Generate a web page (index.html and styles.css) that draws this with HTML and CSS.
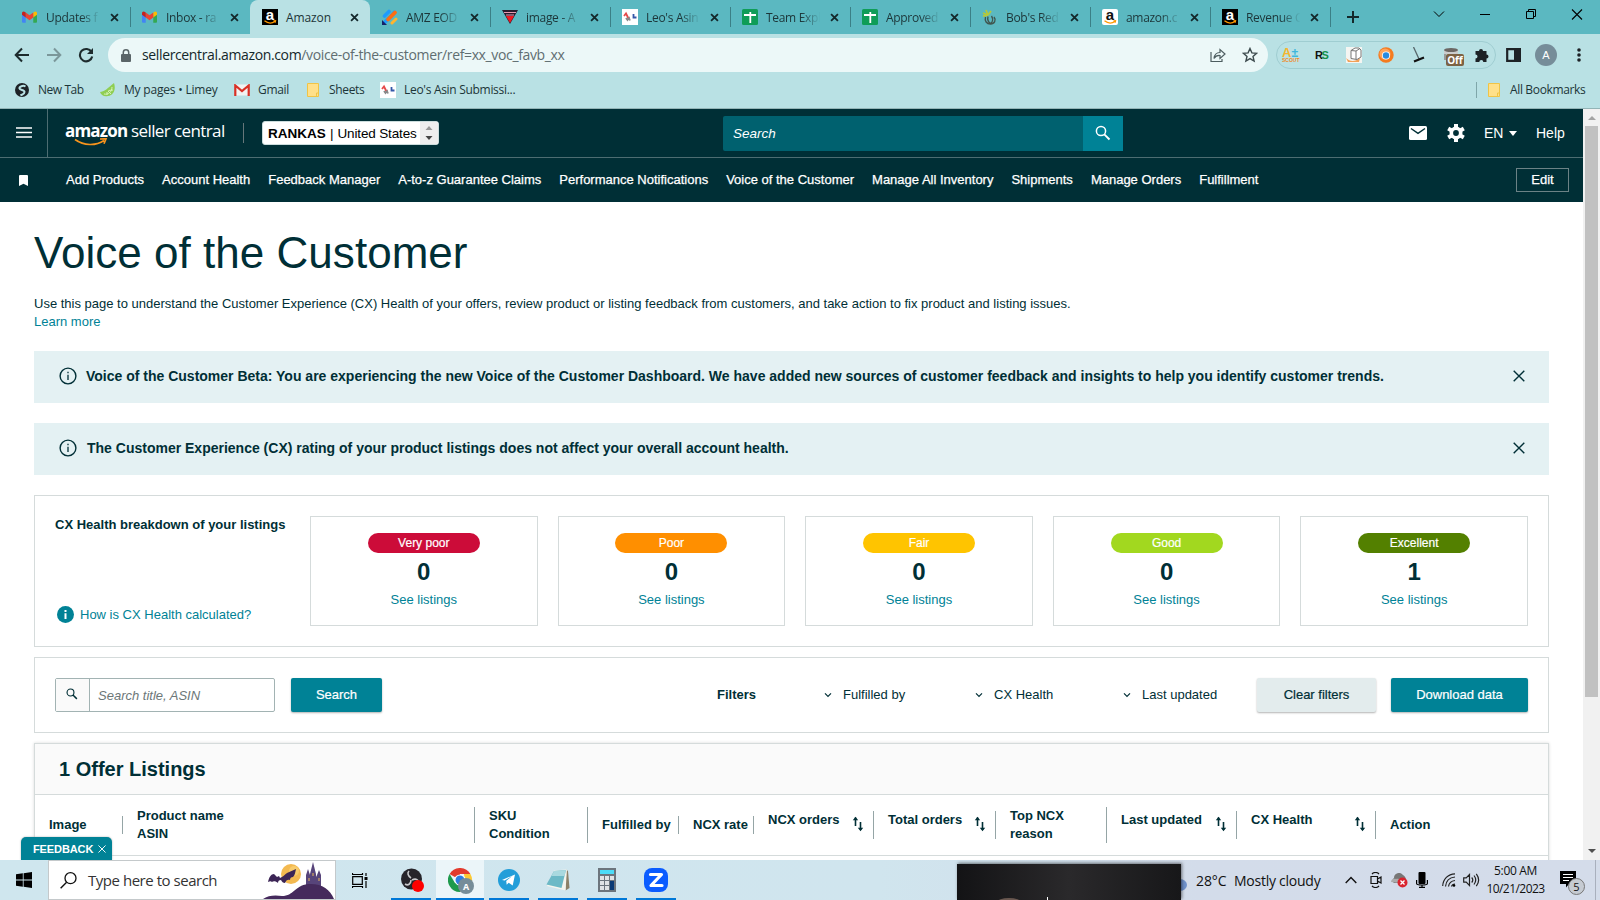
FILE: index.html
```html
<!DOCTYPE html>
<html lang="en">
<head>
<meta charset="utf-8">
<title>Voice of the Customer</title>
<link rel="stylesheet" href="styles.css">
</head>
<body>
<svg class="defs" width="0" height="0">
  <symbol id="x" viewBox="0 0 10 10"><path d="M1.2 1.2 8.8 8.8M8.8 1.2 1.2 8.8" stroke="currentColor" stroke-width="2" fill="none"/></symbol>
  <symbol id="thinx" viewBox="0 0 12 12"><path d="M.7.7 11.3 11.3M11.3.7.7 11.3" stroke="currentColor" stroke-width="1.4" fill="none"/></symbol>
  <symbol id="gm" viewBox="0 0 16 12"><path d="M0 2v9a1 1 0 0 0 1 1h3V5z" fill="#4285f4"/><path d="M16 2v9a1 1 0 0 1-1 1h-3V5z" fill="#34a853"/><path d="M12 1.2 13.5.3C14.700-.4 16 .5 16 2v1.500L12 6.500z" fill="#fbbc04"/><path d="M4 6.500V1.200l4 3 4-3v5.300l-4 3z" fill="#ea4335"/><path d="M0 2C0 .5 1.300-.4 2.500.3L4 1.200v5.300L0 3.500z" fill="#c5221f"/></symbol>
  <symbol id="sheet" viewBox="0 0 16 16"><rect width="16" height="16" rx="1.500" fill="#0f9d58"/><path d="M2 6h12M8.300 3v11" stroke="#fff" stroke-width="1.800"/></symbol>
  <symbol id="leo" viewBox="0 0 16 16"><rect width="16" height="16" fill="#fff"/><path d="M2 7 4 4.500 6 8.500l1.500.5" stroke="#e54b4b" stroke-width="1.800" fill="none"/><path d="M4 9l1.500 2L7 9l1 2.500" stroke="#888" stroke-width="1.800" fill="none"/><path d="M11.500 5V8.500h3" stroke="#3558a8" stroke-width="1.800" fill="none"/></symbol>
  <symbol id="smile" viewBox="0 0 16 16"><path d="M2.500 11.800C6 14.600 10 14.500 13 12.400M11.500 12l2-.2-.3 1.800" stroke="#f90" stroke-width="1.300" fill="none"/></symbol>
  <symbol id="folder" viewBox="0 0 12 14"><path d="M.5.5h11v13H.5z" fill="#ffe08a" stroke="#f0c445"/><path d="M9.500 13.500v-3.500h2" fill="none" stroke="#f0c445"/></symbol>
  <symbol id="info" viewBox="0 0 18 18"><circle cx="9" cy="9" r="7.900" fill="none" stroke="#002f36" stroke-width="1.400"/><path d="M9 7.800V13M9 4.800v1.500" stroke="#002f36" stroke-width="1.300"/></symbol>
  <symbol id="mag" viewBox="0 0 16 16"><circle cx="6" cy="6" r="4.600" fill="none" stroke="currentColor" stroke-width="1.500"/><path d="m9.300 9.300 5.200 5.200" stroke="currentColor" stroke-width="1.900"/></symbol>
  <symbol id="chev" viewBox="0 0 8 6"><path d="m1 1.300 3 3 3-3" fill="none" stroke="#002f36" stroke-width="1.200"/></symbol>
  <symbol id="sort" viewBox="0 0 12 16"><path d="M3.500 1.500V10M8.500 6v8" stroke="#002f36" stroke-width="1.600"/><path d="M.8 4.300 3.500.8l2.700 3.500zM5.800 11.700l2.700 3.500 2.700-3.500z" fill="#002f36"/></symbol>
</svg>

<div class="tabs">
  <div class="tab"><svg class="fav"><use href="#gm" y="2" width="15" height="12"/></svg><span class="tt">Updates f</span><svg class="tx"><use href="#x"/></svg></div>
  <div class="tab nosep"><svg class="fav"><use href="#gm" y="2" width="15" height="12"/></svg><span class="tt">Inbox - ra</span><svg class="tx"><use href="#x"/></svg></div>
  <div class="tab active"><span class="fav az">a<svg><use href="#smile"/></svg></span><span class="tt full">Amazon</span><svg class="tx"><use href="#x"/></svg></div>
  <div class="tab"><svg class="fav" viewBox="0 0 16 16"><path d="M2.500 7 7 2.500M3 13l7-7 2-2.500" stroke="#1e9bff" stroke-width="3.600" stroke-linecap="round"/><path d="m6 10.500 7-7" stroke="#ff6d10" stroke-width="3.800" stroke-linecap="round"/><path d="m10 14 4-4" stroke="#ffb52e" stroke-width="3" stroke-linecap="round"/><path d="M0 11v5h5z" fill="#14216a"/></svg><span class="tt">AMZ EOD</span><svg class="tx"><use href="#x"/></svg></div>
  <div class="tab"><svg class="fav" viewBox="0 0 16 16"><path d="M0 1h16L8 15z" fill="#2a1a2c"/><path d="M4 7h8l-4 7z" fill="#f01820"/><path d="M2 3.500h12M4 6h8" stroke="#e79ab0" stroke-width="1"/></svg><span class="tt">image - A</span><svg class="tx"><use href="#x"/></svg></div>
  <div class="tab"><svg class="fav"><use href="#leo"/></svg><span class="tt">Leo's Asin</span><svg class="tx"><use href="#x"/></svg></div>
  <div class="tab"><svg class="fav"><use href="#sheet"/></svg><span class="tt">Team Expl</span><svg class="tx"><use href="#x"/></svg></div>
  <div class="tab"><svg class="fav"><use href="#sheet"/></svg><span class="tt">Approved</span><svg class="tx"><use href="#x"/></svg></div>
  <div class="tab"><svg class="fav" viewBox="0 0 16 16"><path d="M6 6 1 4M6 6 4 1M6 6 9 2M6 6 1 7" stroke="#b5c83a" stroke-width="1.800"/><path d="M3.500 8c-1 4 1 7 5 7s6-4 3.500-7M6 7.500c-1 4 1 6 2.500 7M9.500 7c2 3 1 6-1 7.500" stroke="#40564f" stroke-width="1.400" fill="none"/></svg><span class="tt">Bob's Red</span><svg class="tx"><use href="#x"/></svg></div>
  <div class="tab"><span class="fav az white">a<svg><use href="#smile"/></svg></span><span class="tt">amazon.c</span><svg class="tx"><use href="#x"/></svg></div>
  <div class="tab"><span class="fav az">a<svg><use href="#smile"/></svg></span><span class="tt">Revenue C</span><svg class="tx"><use href="#x"/></svg></div>
  <svg class="plus" viewBox="0 0 12 12"><path d="M6 0v12M0 6h12" stroke="#14282b" stroke-width="2"/></svg>
  <div class="wctl">
    <svg viewBox="0 0 46 28"><path d="m18 11.500 5 5 5-5" fill="none" stroke="#000"/></svg>
    <svg viewBox="0 0 46 28"><path d="M18 14.500h10" stroke="#000"/></svg>
    <svg viewBox="0 0 46 28"><path d="M18.500 11.500h7v7h-7zM20.500 11.500v-2h7v7h-2" fill="none" stroke="#000"/></svg>
    <svg viewBox="0 0 46 28"><path d="m18 9.500 10 10m0-10-10 10" stroke="#000" stroke-width="1.100"/></svg>
  </div>
</div>

<div class="toolbar">
  <svg class="navi" viewBox="0 0 16 16"><path d="M15 8H2M8 1.500 1.700 8 8 14.500" fill="none" stroke="#1d2b2d" stroke-width="2"/></svg>
  <svg class="navi dim" viewBox="0 0 16 16"><path d="M1 8h13M8 1.500 14.300 8 8 14.500" fill="none" stroke="#7b979a" stroke-width="2"/></svg>
  <svg class="navi" viewBox="0 0 16 16"><path d="M13.500 5A6.200 6.200 0 1 0 14.200 9.500" fill="none" stroke="#1d2b2d" stroke-width="2.100"/><path d="M15 1v6H9z" fill="#1d2b2d"/></svg>
  <div class="omni">
    <svg class="lock" viewBox="0 0 10 13"><rect y="5" width="10" height="8" rx="1" fill="#5a6568"/><path d="M2.300 5V3.500a2.700 2.700 0 0 1 5.400 0V5" fill="none" stroke="#5a6568" stroke-width="1.500"/></svg>
    <span class="url"><b>sellercentral.amazon.com</b>/voice-of-the-customer/ref=xx_voc_favb_xx</span>
    <svg class="share" viewBox="0 0 16 16"><path d="M1 5v9.500h11V12M4 11.500C4.500 7 7 5.500 10 5.500V2.500l5 4.500-5 4.500v-3C7.500 8.300 5.500 9 4 11.500z" fill="none" stroke="#4d5d60" stroke-width="1.200"/></svg>
    <svg class="star" viewBox="0 0 16 16"><path d="m8 1.500 1.900 4.400 4.700.4-3.600 3.100 1.100 4.700L8 11.600l-4.100 2.500L5 9.400 1.400 6.300l4.700-.4z" fill="none" stroke="#3d4b4e" stroke-width="1.400"/></svg>
  </div>
  <div class="exts">
    <span class="scout"><i>A</i><em>±</em><small>SCOUT</small></span>
    <span class="rs">R<i>S</i></span>
    <svg viewBox="0 0 16 16"><rect width="16" height="16" fill="#f5f5f2"/><path d="M0 11c4 4 9 4 14 0l-1 4H2z" fill="#f2a158"/><path d="M5 3.500 9 1h4l2 2v7l-4 2.500-6-1zM5 3.500l5 .5v8M10 4l4-2.500" fill="#fff" stroke="#777"/></svg>
    <svg viewBox="0 0 16 16"><circle cx="8" cy="8" r="7.700" fill="#f47b20"/><circle cx="7" cy="7" r="5.500" fill="#ffa55c"/><circle cx="8" cy="8.500" r="4" fill="#fff"/><circle cx="8" cy="8.500" r="3.200" fill="#2a8be0"/></svg>
    <svg viewBox="0 0 16 16"><path d="M3.500 0 9 12" stroke="#56666a" stroke-width="1.300"/><path d="M4 14.500 14 10.500" stroke="#111" stroke-width="2.200"/></svg>
    <span class="off"><svg viewBox="0 0 18 14"><path d="M2 3h14v4H2z" fill="#ccc"/><ellipse cx="9" cy="3" rx="7" ry="2" fill="#6c6764"/><path d="M3 7v6M15 7v3" stroke="#999" stroke-width="2"/></svg><b>Off</b></span>
    <svg viewBox="0 0 16 16"><path d="M1.500 4H5a2 2 0 1 1 4 0h3.500v3.500a2 2 0 1 1 0 4V15H9.300a2 2 0 1 0-4 0H1.500v-3.500a2 2 0 1 0 0-4z" fill="#1d2226"/></svg>
  </div>
  <svg class="side" viewBox="0 0 15 14"><path d="M1.200 1.200h12.600v11.600H1.200z" fill="none" stroke="#1d2226" stroke-width="2.200"/><path d="M8 0h7v14H8z" fill="#1d2226"/></svg>
  <span class="avatar">A</span>
  <svg class="dots" viewBox="0 0 4 14"><g fill="#1d2226"><circle cx="2" cy="2" r="1.800"/><circle cx="2" cy="7" r="1.800"/><circle cx="2" cy="12" r="1.800"/></g></svg>
</div>

<div class="marks">
  <svg class="m1" viewBox="0 0 14 14"><circle cx="7" cy="7" r="7" fill="#1d2226"/><path d="M10.500 3.500C8 2 4 3.500 4.500 5.500S9.500 6.500 9.500 9s-3 2.500-4 3.500" stroke="#b9e1e4" stroke-width="2" fill="none"/></svg><span class="t1">New Tab</span>
  <svg class="m2" viewBox="0 0 15 14"><path d="M0 9C4 9 8 5 14 0c2 6 0 12-6 13C4 14 1 12 0 9z" fill="#8fce52"/><path d="M4 11c4 1 8-2 8-7M8 8l3 3M8.500 7.500 13 7M7 9v3" stroke="#d7f3b8" fill="none"/></svg><span class="t2">My pages • Limey</span>
  <svg class="m3" viewBox="0 0 16 12"><path d="M1 .5h14v11H1z" fill="#f2f2f2"/><path d="M1.300 12V1.500L8 7l6.700-5.500V12" fill="none" stroke="#d93025" stroke-width="2.200"/></svg><span class="t3">Gmail</span>
  <svg class="m4"><use href="#folder"/></svg><span class="t4">Sheets</span>
  <svg class="m5"><use href="#leo"/></svg><span class="t5">Leo's Asin Submissi...</span>
  <i class="msep"></i>
  <svg class="m6"><use href="#folder"/></svg><span class="t6">All Bookmarks</span>
</div>

<div class="view">
<div class="page">
  <header class="top">
    <div class="burger"><svg viewBox="0 0 16 11"><path d="M0 1h16M0 5.500h16M0 10h16" stroke="#fff" stroke-width="1.500"/></svg></div>
    <div class="logo"><b>amazon</b><span>seller central</span><svg viewBox="0 0 34 8"><path d="M1 1.500c9 6.500 21 6.500 29 1M26 1l6-.2-2 5" fill="none" stroke="#f7941d" stroke-width="1.700"/></svg></div>
    <i class="lsep"></i>
    <div class="acct"><b>RANKAS</b><span>|</span><span class="us">United States</span><div class="spin"><svg viewBox="0 0 8 14"><path d="M.5 4h7L4 0z" fill="#999"/><path d="M.5 10h7L4 14z" fill="#444"/></svg></div></div>
    <div class="search"><em>Search</em><button><svg><use href="#mag"/></svg></button></div>
    <svg class="mail" viewBox="0 0 18 14"><rect width="18" height="14" rx="1.500" fill="#fff"/><path d="m2 2.500 7 4.800 7-4.800" fill="none" stroke="#002f36" stroke-width="1.500"/></svg>
    <svg class="gear" viewBox="0 0 18 18"><path d="M7 0h4v18H7z" fill="#fff"/><path d="M7 0h4v18H7z" fill="#fff" transform="rotate(60 9 9)"/><path d="M7 0h4v18H7z" fill="#fff" transform="rotate(120 9 9)"/><circle cx="9" cy="9" r="6.500" fill="#fff"/><circle cx="9" cy="9" r="2.900" fill="#002f36"/></svg>
    <span class="en">EN</span><i class="caret"></i><span class="help">Help</span>
  </header>
  <nav class="nav">
    <svg class="bm" viewBox="0 0 9 11"><path d="M1 0h7a1 1 0 0 1 1 1v10L4.500 8.800 0 11V1a1 1 0 0 1 1-1z" fill="#fff"/></svg>
    <a>Add Products</a><a>Account Health</a><a>Feedback Manager</a><a>A-to-z Guarantee Claims</a><a>Performance Notifications</a><a>Voice of the Customer</a><a>Manage All Inventory</a><a>Shipments</a><a>Manage Orders</a><a>Fulfillment</a>
    <button class="edit">Edit</button>
  </nav>
  <main>
    <h1>Voice of the Customer</h1>
    <p class="intro">Use this page to understand the Customer Experience (CX) Health of your offers, review product or listing feedback from customers, and take action to fix product and listing issues.</p>
    <a class="more">Learn more</a>
    <div class="banner b1"><svg class="inf"><use href="#info"/></svg><b>Voice of the Customer Beta: You are experiencing the new Voice of the Customer Dashboard. We have added new sources of customer feedback and insights to help you identify customer trends.</b><svg class="close"><use href="#thinx"/></svg></div>
    <div class="banner b2"><svg class="inf"><use href="#info"/></svg><b>The Customer Experience (CX) rating of your product listings does not affect your overall account health.</b><svg class="close"><use href="#thinx"/></svg></div>
    <section class="health">
      <div class="hl"><b>CX Health breakdown of your listings</b><a><svg viewBox="0 0 17 17"><circle cx="8.500" cy="8.500" r="8.500" fill="#008296"/><path d="M8.500 7.300V13M8.500 4v2" stroke="#fff" stroke-width="2"/></svg>How is CX Health calculated?</a></div>
      <div class="card"><span class="pill vp">Very poor</span><b>0</b><a>See listings</a></div>
      <div class="card"><span class="pill po">Poor</span><b>0</b><a>See listings</a></div>
      <div class="card"><span class="pill fa">Fair</span><b>0</b><a>See listings</a></div>
      <div class="card"><span class="pill go">Good</span><b>0</b><a>See listings</a></div>
      <div class="card"><span class="pill ex">Excellent</span><b>1</b><a>See listings</a></div>
    </section>
    <section class="filters">
      <div class="find"><span><svg><use href="#mag"/></svg></span><em>Search title, ASIN</em></div>
      <button class="btn go1">Search</button>
      <b class="fl">Filters</b>
      <div class="dd d1"><svg><use href="#chev"/></svg>Fulfilled by</div>
      <div class="dd d2"><svg><use href="#chev"/></svg>CX Health</div>
      <div class="dd d3"><svg><use href="#chev"/></svg>Last updated</div>
      <button class="btn clear">Clear filters</button>
      <button class="btn dl">Download data</button>
    </section>
    <section class="offers">
      <h2>1 Offer Listings</h2>
      <div class="cols">
        <div class="c s">Image</div>
        <div class="c l">Product name<br>ASIN</div>
        <div class="c l">SKU<br>Condition</div>
        <div class="c s">Fulfilled by</div>
        <div class="c s">NCX rate</div>
        <div class="c m"><span>NCX orders</span><svg><use href="#sort"/></svg></div>
        <div class="c m"><span>Total orders</span><svg><use href="#sort"/></svg></div>
        <div class="c l">Top NCX<br>reason</div>
        <div class="c m"><span>Last updated</span><svg><use href="#sort"/></svg></div>
        <div class="c m"><span>CX Health</span><svg><use href="#sort"/></svg></div>
        <div class="c last">Action</div>
      </div>
    </section>
  </main>
  <div class="feedback">FEEDBACK<svg><use href="#thinx"/></svg></div>
</div>
<div class="scroll"><i class="up"></i><div class="thumb"></div><i class="down"></i></div>
</div>

<footer class="task">
  <div class="start"><svg viewBox="0 0 16 16"><path d="M0 2.300 6.800 1.300v6.300H0zM7.600 1.200 16 0v7.600H7.600zM0 8.400h6.800v6.300L0 13.700zM7.600 8.400H16V16l-8.400-1.200z"/></svg></div>
  <div class="tsearch">
    <svg class="tm" viewBox="0 0 17 17"><circle cx="10.500" cy="6.200" r="5.500" fill="none" stroke="#111" stroke-width="1.300"/><path d="m6.600 10.300-6 6" stroke="#111" stroke-width="1.400"/></svg>
    <span>Type here to search</span>
    <svg class="castle" viewBox="0 0 72 38"><circle cx="28" cy="13" r="10" fill="#f3b950"/><circle cx="31" cy="10" r="5" fill="#f8cb6b"/><path d="M5 21c1-5 3-8 6-8l3 3 2-1 1 2c3-1 4-3 7-5 3-1 6-3 9-4-1 4-1 6-3 8-2 0-3 1-3 3-2-1-4 0-5 3-2 0-3-1-4-3-2 0-3 1-3 3-2-2-5-2-6-1-1-1-2-1-4 0z" fill="#3c2556"/><path d="M43 26V14l2-6 2 6v-1l3-12 3 12v3l1-2 2-5 2 5v12z" fill="#57447a"/><path d="M0 38c5-4 13-4 19-3 12 0 12-10 26-12 13-1 22 5 26 15z" fill="#452a5c"/><path d="M50 12v3M46 17v3M56 17v3" stroke="#e9b85c"/></svg>
  </div>
  <div class="tview"><svg viewBox="0 0 16 15"><path d="M.7 3.700h9.600v7.600H.7zM.5 0v1.500h10V0M.5 15v-1.500h10V15M14 0v3M14 8v7" fill="none" stroke="#000" stroke-width="1.200"/><path d="M12.500 4h3v3h-3z"/></svg></div>
  <div class="app a1"><svg viewBox="0 0 24 24"><circle cx="10.500" cy="11" r="10.500" fill="#26242a"/><path d="M10 10C7 8 6 5 8 3m3 9c4-2 7 0 7 3m-8-3c0 4-3 6-6 4" fill="none" stroke="#c9c9cc" stroke-width="1.600"/><circle cx="17" cy="18" r="6" fill="#f00"/></svg></div>
  <div class="app a2"><svg viewBox="0 0 26 26"><path d="M12 12 1.600 6A12 12 0 0 1 22.400 6H12z" fill="#e33b2e"/><path d="M22.400 6A12 12 0 0 1 12 24l5-9-1-9z" fill="#fcc934"/><path d="M1.600 6A12 12 0 0 0 12 24l5-9H7z" fill="#1e9a4d"/><circle cx="12" cy="12" r="5.600" fill="#fff"/><circle cx="12" cy="12" r="4.500" fill="#2f7de1"/><circle cx="18" cy="18" r="8" fill="#768d99"/></svg><b>A</b></div>
  <div class="app a3"><svg viewBox="0 0 22 22"><circle cx="11" cy="11" r="11" fill="#229ed9"/><path d="m4 11 13-5.500-2.300 11-4-2.800-2 2-.5-3.700 6-5-7.500 4.500z" fill="#fff"/></svg></div>
  <div class="app a4"><svg viewBox="0 0 24 24"><path d="M20 1.500 22 3l1.500 17-4 2.500z" fill="#8d8168"/><path d="M8 2.500 21 1.500l-1.500 21L1 18z" fill="#f5f5ee"/><path d="M8 3 20 2l-4.500 18L.5 16.500z" fill="#6cb9c6"/><path d="M8 3 20 2l-1.500 6L5.500 8z" fill="#a9d9df"/></svg></div>
  <div class="app a5"><svg viewBox="0 0 18 24"><path d="M0 0h18v24H0z" fill="#6c757d"/><path d="M2 2h14v4H2z" fill="#4cdcf7"/><path d="M2 8h4v4H2zM7 8h4v4H7zM12 8h4v4h-4zM2 13h4v4H2zM7 13h4v4H7zM2 18h4v4H2zM7 18h4v4H7z" fill="#e0e3e5"/><path d="M12 13h4v9h-4z" fill="#0a3a75"/></svg></div>
  <div class="app a6"><svg viewBox="0 0 24 24"><rect width="24" height="24" rx="8" fill="#0b5cff"/><path d="M6.500 6.500h11L7 17.500h11" fill="none" stroke="#fff" stroke-width="3.200" stroke-linejoin="round" stroke-linecap="round"/></svg></div>
  <div class="peek"><svg viewBox="0 0 224 36"><ellipse cx="52" cy="38" rx="12" ry="4" fill="#6a5850"/><path d="M90.500 33v3" stroke="#fff"/></svg></div>
  <span class="moon"></span>
  <span class="temp">28°C</span><span class="wx">Mostly cloudy</span>
  <svg class="i1" viewBox="0 0 12 8"><path d="m.7 7 5.300-5.500L11.300 7" fill="none" stroke="#111" stroke-width="1.400"/></svg>
  <svg class="i2" viewBox="0 0 12 16"><path d="M1 4.500h6.500v7H1zM7.500 7l3.500-2v6L7.500 9M2 2C4-.1 7-.1 9 2M2 14c2 2 5 2 7 0" fill="none" stroke="#111" stroke-width="1.200"/></svg>
  <svg class="i3" viewBox="0 0 17 15"><path d="M3 10a3 3 0 0 1 0-5 5 5 0 0 1 9-3c2 1 3 3 3 5l-4 3z" fill="#777"/><path d="M0 9c0-3 3-4 5-3 3-1 5 1 5 4z" fill="#ababab"/><circle cx="11.500" cy="9.500" r="5" fill="#d9232e"/><path d="m9.500 7.500 4 4m0-4-4 4" stroke="#fff" stroke-width="1.300"/></svg>
  <svg class="i4" viewBox="0 0 12 16"><rect x="2.500" width="7" height="12" rx="1" fill="#000"/><path d="M.6 8v3.500c0 2 10.800 2 10.800 0V8M6 13v2.500M3 15.400h6" fill="none" stroke="#000" stroke-width="1.200"/></svg>
  <svg class="i5" viewBox="0 0 14 14"><path d="M.7 13C1 6 6 1 13 .8M3.500 13.500C4 8 7.500 4.500 13 4M6.500 13.500C7 10 9 8 13 7.500M9.500 13.500c.5-2 1.500-2.500 3.500-2.500" fill="none" stroke="#222" stroke-width="1.200"/><circle cx="12" cy="12.500" r="1.300"/></svg>
  <svg class="i6" viewBox="0 0 17 14"><path d="M.7 4.800h2.500L6.500 1.500v11L3.200 9.200H.7zM8.700 4.500c1.300 1.500 1.300 3.500 0 5M11 2.500c2.300 3 2.300 6 0 9M13.300.8c3 4 3 8.400 0 12.400" fill="none" stroke="#222" stroke-width="1.200"/></svg>
  <div class="clock"><span class="k1">5:00 AM</span><span class="k2">10/21/2023</span></div>
  <div class="note"><svg viewBox="0 0 16 17"><path d="M0 0h16v13H9l-3 3.500V13H0z"/><path d="M3 3.500h10M3 6.500h10M3 9.500h6" stroke="#fff"/></svg><b>5</b></div>
  <i class="desk"></i>
</footer>
</body>
</html>
```

FILE: styles.css
```css
* { box-sizing: border-box; }
body { margin: 0; width: 1600px; height: 900px; overflow: hidden; display: flex; flex-direction: column; font-family: "Liberation Sans", Arial, sans-serif; color: #002f36; background: #fff; }
.defs { position: absolute; }
svg { display: block; flex: none; }
button { border: 0; padding: 0; font: inherit; color: inherit; }
i { font-style: normal; }

/* Browser tabs */
.tabs { height: 34px; flex: none; background: #5bb8c1; display: flex; align-items: center; padding-left: 10px; font: 12px "Open Sans", "Noto Sans", sans-serif; color: #1c3538; }
.tab { width: 120px; height: 34px; flex: none; display: flex; align-items: center; padding-left: 12px; position: relative; }
.tab::after { content: ""; position: absolute; right: -1px; top: 7px; width: 1px; height: 20px; background: #3b7f86; }
.tab.nosep::after, .tab.active::after { display: none; }
.tab.active { background: #b9e1e4; border-radius: 8px 8px 0 0; }
.fav { width: 16px; height: 16px; flex: none; }
.tt { width: 56px; margin-left: 8px; letter-spacing: -.3px; white-space: nowrap; -webkit-mask-image: linear-gradient(90deg, #000 62%, transparent 97%); mask-image: linear-gradient(90deg, #000 62%, transparent 97%); }
.tt.full { -webkit-mask-image: none; mask-image: none; letter-spacing: -.1px; }
.tx { width: 9px; height: 9px; margin-left: 8px; color: #14282b; }
.az { background: #000; color: #fff; font: bold 15px/12px "Liberation Sans", sans-serif; text-align: center; position: relative; }
.az.white { background: #fff; color: #111; border-radius: 2px; }
.az svg { position: absolute; inset: 0; width: 16px; height: 16px; }
.plus { width: 12px; height: 12px; margin-left: 17px; }
.wctl { margin-left: auto; display: flex; height: 28px; align-self: flex-start; }
.wctl svg { width: 46px; height: 28px; }

/* Address bar */
.toolbar { height: 42px; flex: none; background: #b9e1e4; display: flex; align-items: center; padding-left: 14px; }
.navi { width: 16px; height: 16px; margin-right: 16px; }
.omni { width: 1160px; height: 34px; margin-left: -2px; border-radius: 17px; background: #ecf8f8; display: flex; align-items: center; padding-left: 13px; font: 14px "Open Sans", "Noto Sans", sans-serif; color: #5f6e71; }
.lock { width: 10px; height: 13px; }
.url { margin: -1px 0 0 11px; width: 1068px; white-space: nowrap; letter-spacing: -.36px; }
.url b { font-weight: 400; color: #14282b; }
.share, .star { width: 16px; height: 16px; }
.share { margin-right: 16px; }
.exts { width: 220px; height: 28px; margin-left: 8px; border: 1px solid #9fcdd1; border-radius: 14px; display: flex; align-items: center; gap: 16px; padding-left: 5px; }
.exts > * { width: 16px; height: 16px; flex: none; }
.scout { position: relative; color: #f5b52e; font: bold 13px/11px "Liberation Sans", sans-serif; white-space: nowrap; }
.scout em { color: #3fb6dc; font-size: 12px; font-style: normal; }
.scout small { position: absolute; left: 0; top: 11px; font-size: 5px; line-height: 5px; color: #f08a24; }
.rs { font: bold 11px/16px "Liberation Sans", sans-serif; color: #111; letter-spacing: -1.500px; padding-left: 1px; }
.rs i { color: #14904a; }
.off { position: relative; }
.off svg { width: 18px; height: 14px; }
.off b { position: absolute; left: 4px; top: 7px; background: #7c6244; color: #fff; font: bold 10px/12px "Open Sans", sans-serif; border-radius: 2px; width: 18px; text-align: center; }
.side { width: 15px; height: 14px; margin-left: 10px; }
.avatar { width: 22px; height: 22px; border-radius: 50%; margin-left: 14px; background: #768d99; color: #fff; font-size: 11px; line-height: 22px; text-align: center; }
.dots { width: 4px; height: 14px; margin-left: 20px; }

/* Bookmarks */
.marks { height: 33px; flex: none; background: #b9e1e4; border-bottom: 1px solid #93b4b6; display: flex; align-items: center; padding: 0 0 5px 15px; font: 12px "Open Sans", "Noto Sans", sans-serif; color: #1c3538; white-space: nowrap; }
.marks span { flex: none; }
.m1 { width: 14px; height: 14px; margin-right: 9px; } .t1 { width: 62px; letter-spacing: -.45px; }
.m2 { width: 15px; height: 14px; margin-right: 9px; } .t2 { width: 110px; letter-spacing: -.2px; }
.m3 { width: 16px; height: 12px; margin-right: 8px; } .t3 { width: 49px; letter-spacing: -.3px; }
.m4 { width: 12px; height: 14px; margin-right: 10px; } .t4 { width: 51px; letter-spacing: -.35px; }
.m5 { width: 16px; height: 16px; margin-right: 8px; } .t5 { letter-spacing: -.3px; }
.msep { width: 1px; height: 16px; background: #7fa6a9; margin-left: auto; }
.m6 { width: 12px; height: 14px; margin: 0 10px 0 11px; } .t6 { width: 90px; letter-spacing: -.35px; }

/* Page viewport */
.view { height: 751px; flex: none; display: flex; }
.page { width: 1583px; position: relative; overflow: hidden; }
.top { height: 49px; background: #002f36; border-bottom: 1px solid #4d6d72; display: flex; align-items: center; color: #fff; }
.burger { width: 48px; height: 48px; border-right: 1px solid #4d6d72; padding: 18px 0 0 16px; }
.burger svg { width: 16px; height: 11px; }
.logo { width: 160px; margin: -5px 1px 0 17px; display: flex; position: relative; font: 17px/22px "Open Sans", sans-serif; white-space: nowrap; }
.logo b { width: 66px; letter-spacing: -.8px; }
.logo span { letter-spacing: -.6px; }
.logo svg { position: absolute; left: 9px; top: 18px; width: 34px; height: 8px; }
.lsep { width: 1px; height: 20px; background: #66777a; margin-left: 17px; }
.acct { width: 177px; height: 24px; margin-left: 18px; background: #fff; border: 1px solid #cdd; border-radius: 3px; color: #000; display: flex; align-items: center; font-size: 13.5px; padding-left: 5px; white-space: nowrap; flex: none; }
.acct b { width: 57px; }
.acct span { margin-left: 5px; }
.acct .us { margin-left: 4px; letter-spacing: -.15px; }
.spin { width: 18px; height: 22px; background: #eee; margin-left: auto; padding: 4px 5px; flex: none; }
.spin svg { width: 8px; height: 14px; }
.search { width: 400px; height: 35px; margin-left: 284px; background: #00616f; display: flex; align-items: center; border-radius: 2px; }
.search em { flex: 1; padding-left: 10px; font-size: 13.5px; }
.search button { width: 40px; height: 35px; background: #008296; color: #fff; padding-left: 12px; }
.search svg { width: 16px; height: 16px; }
.mail { width: 18px; height: 14px; margin-left: 286px; }
.gear { width: 18px; height: 18px; margin-left: 20px; }
.en { margin-left: 19px; font-size: 14px; width: 24px; }
.caret { border: 4px solid transparent; border-top: 5px solid #fff; border-bottom: 0; margin: 0 19px 0 1px; }
.help { font-size: 14px; }
.nav { height: 44px; background: #002f36; color: #fff; display: flex; align-items: center; font-size: 13px; -webkit-text-stroke: .25px #fff; gap: 18px; }
.nav a { white-space: nowrap; margin-top: -2px; }
.bm { width: 9px; height: 11px; margin: 0 20px 0 19px; }
.edit { width: 53px; height: 24px; background: none; border: 1px solid #6b8286; margin-left: auto; margin-right: 14px; padding-bottom: 2px; color: #fff; }
main { padding: 0 34px; }
h1 { font-size: 44px; font-weight: 400; line-height: 50px; margin: 26px 0 0; letter-spacing: .03px; }
.intro { font-size: 13px; line-height: 18px; margin: 17px 0 0; white-space: nowrap; }
.more { display: block; font-size: 13px; line-height: 18px; color: #008296; margin-bottom: 20px; }
.banner { width: 1515px; height: 52px; background: #e4f1f3; display: flex; align-items: flex-start; padding: 16px 24px 0 25px; font-size: 14px; line-height: 18px; margin-bottom: 20px; white-space: nowrap; }
.inf { width: 18px; height: 18px; margin-right: 9px; }
.b2 .inf { margin-right: 10px; }
.close { width: 12px; height: 12px; margin: 3px 0 0 auto; }
.health { width: 1515px; height: 152px; border: 1px solid #d5dbdb; display: flex; gap: 20px; padding: 20px 20px 0; margin-bottom: 10px; }
.hl { width: 235px; font-size: 13px; white-space: nowrap; }
.hl b { display: block; height: 90px; line-height: 17px; }
.hl a { display: flex; align-items: center; gap: 6px; color: #008296; margin-left: 2px; line-height: 18px; }
.hl a svg { width: 17px; height: 17px; margin-top: -1px; }
.card { flex: 1; height: 110px; border: 1px solid #d5dbdb; display: flex; flex-direction: column; align-items: center; padding-top: 16px; }
.pill { width: 112px; height: 20px; border-radius: 10px; color: #fff; font-size: 12px; line-height: 21px; text-align: center; -webkit-text-stroke: .2px #fff; }
.vp { background: #cc0c39; } .po { background: #ff8f00; } .fa { background: #ffc400; } .go { background: #a2d81f; } .ex { background: #538000; }
.card b { font-size: 24px; line-height: 28px; margin-top: 5px; }
.card a { font-size: 13px; line-height: 18px; color: #008296; margin-top: 5px; }
.filters { width: 1515px; height: 76px; border: 1px solid #d5dbdb; display: flex; align-items: center; padding: 0 20px; margin-bottom: 10px; font-size: 13px; white-space: nowrap; }
.find { width: 220px; height: 34px; border: 1px solid #a2b3b3; border-radius: 2px; display: flex; align-items: center; color: #6c7778; font-size: 13px; }
.find span { width: 34px; height: 32px; background: #fafafa; border-right: 1px solid #a2b3b3; padding: 9px 10px; color: #002f36; }
.find svg { width: 12px; height: 12px; }
.find em { padding-left: 8px; }
.btn { height: 34px; border-radius: 2px; background: #008296; color: #fff; text-align: center; padding-bottom: 2px; box-shadow: 0 1px 2px rgba(0,0,0,.3); -webkit-text-stroke: .2px; flex: none; }
.go1 { width: 91px; margin-left: 16px; }
.fl { margin: -2px 0 0 335px; width: 107px; }
.dd { display: flex; align-items: center; gap: 11px; margin-top: -2px; flex: none; }
.dd svg { width: 8px; height: 6px; margin-top: 2px; }
.d1 { width: 151px; } .d2 { width: 148px; } .d3 { width: 134px; }
.clear { width: 119px; background: #e3eced; color: #002f36; }
.dl { width: 137px; margin-left: 15px; }
.offers { width: 1515px; border: 1px solid #d5dbdb; box-shadow: 0 0 3px rgba(0,0,0,.15); height: 200px; }
h2 { margin: 0; height: 51px; background: #fafafa; border-bottom: 1px solid #d5dbdb; font-size: 20px; line-height: 50px; padding-left: 24px; }
.cols { height: 61px; border-bottom: 1px solid #d5dbdb; display: grid; grid-template-columns: 88px 352px 113px 91px 75px 120px 122px 111px 130px 139px 1fr; align-items: center; font-weight: 700; font-size: 13px; line-height: 18px; white-space: nowrap; }
.c { border-right: 1px solid #95a5a6; padding-left: 14px; }
.c.s { height: 18px; }
.c.m { height: 28px; display: flex; justify-content: space-between; padding-right: 9px; line-height: 18px; }
.c.m svg { width: 12px; height: 16px; margin-top: 5px; }
.c.last { border: 0; }
.feedback { position: absolute; left: 21px; bottom: 0; width: 91px; height: 23px; border-radius: 5px 5px 0 0; background: #008296; color: #fff; font: bold 11px/24px "Liberation Sans", sans-serif; letter-spacing: -.1px; padding-left: 12px; display: flex; align-items: center; gap: 5px; box-shadow: 0 0 2px #aaa; }
.feedback svg { width: 8px; height: 8px; }
.scroll { width: 17px; background: #f1f1f1; display: flex; flex-direction: column; align-items: center; }
.up { border: 4px solid transparent; border-bottom-color: #a3a3a3; border-top: 0; margin-top: 7px; }
.thumb { width: 13px; height: 571px; background: #c1c1c1; margin-top: 6px; }
.down { border: 4px solid transparent; border-top: 4px solid #505050; border-bottom: 0; margin: auto 0 7px; }

/* Desktop taskbar */
.task { height: 40px; flex: none; background: linear-gradient(90deg, #cfe6ee 0, #d0e5ee 55%, #d3dcea 75%, #d4dcea 100%); display: flex; align-items: center; font-family: "Open Sans", "Noto Sans", sans-serif; color: #111; white-space: nowrap; }
.task > * { flex: none; }
.start { width: 48px; padding-left: 16px; } .start svg { width: 16px; height: 16px; }
.tsearch { width: 288px; height: 40px; background: #fff; border: 1px solid #c4c9cb; display: flex; align-items: center; padding-left: 11px; font-size: 15px; color: #333; }
.tm { width: 17px; height: 17px; margin-right: 11px; }
.tsearch span { width: 175px; letter-spacing: -.47px; }
.castle { width: 72px; height: 38px; }
.tview { width: 55px; padding-left: 16px; } .tview svg { width: 16px; height: 15px; }
.app { height: 40px; width: 40px; border-bottom: 2px solid #0078d7; display: flex; align-items: center; justify-content: center; margin-right: 9px; position: relative; }
.app svg { width: 22px; height: 22px; margin-top: 1px; }
.a1 { margin-right: 5px; } .a1 svg { width: 24px; height: 24px; margin: 2px 0 0 3px; }
.a2 { width: 48px; background: #ebf5f9; margin-right: 5px; } .a2 svg { width: 26px; height: 26px; margin: 3px 0 0 1px; }
.a2 b { position: absolute; left: 25px; top: 20px; width: 10px; color: #fff; font: bold 9px/14px "Open Sans", sans-serif; text-align: center; }
.a4 svg, .a6 svg { width: 24px; height: 24px; }
.a5 svg { width: 18px; height: 24px; }
.peek { width: 224px; height: 36px; background: linear-gradient(90deg, #131315, #2a292b 50%, #171719); align-self: flex-end; margin-left: 272px; box-shadow: 1px -1px 3px rgba(0,0,0,.5); z-index: 1; }
.peek svg { width: 224px; height: 36px; }
.moon { width: 14px; height: 12px; border-radius: 50%; background: #6f91cb; margin: 10px 9px 0 -8px; }
.temp { font-size: 14px; width: 38px; letter-spacing: -.1px; } .wx { font-size: 14px; width: 111px; letter-spacing: -.25px; }
.i1 { width: 12px; height: 8px; margin-right: 13px; }
.i2 { width: 12px; height: 16px; margin-right: 9px; }
.i3 { width: 17px; height: 15px; margin-right: 8px; }
.i4 { width: 12px; height: 16px; margin-right: 14px; }
.i5 { width: 14px; height: 14px; margin-right: 7px; }
.i6 { width: 17px; height: 14px; }
.clock { width: 71px; display: flex; flex-direction: column; align-items: center; font-size: 12px; line-height: 18px; letter-spacing: -.55px; }
.k1 { letter-spacing: -.35px; }
.note { position: relative; margin: -2px 0 0 9px; } .note svg { width: 16px; height: 17px; }
.note b { position: absolute; left: 8px; top: 7px; width: 17px; height: 17px; border-radius: 50%; background: #c6cbd2; border: 1px solid #777; font: 11px/15px "Open Sans", sans-serif; text-align: center; }
.desk { width: 1px; height: 40px; background: #a9b0bd; margin: 0 4px 0 auto; }
```
